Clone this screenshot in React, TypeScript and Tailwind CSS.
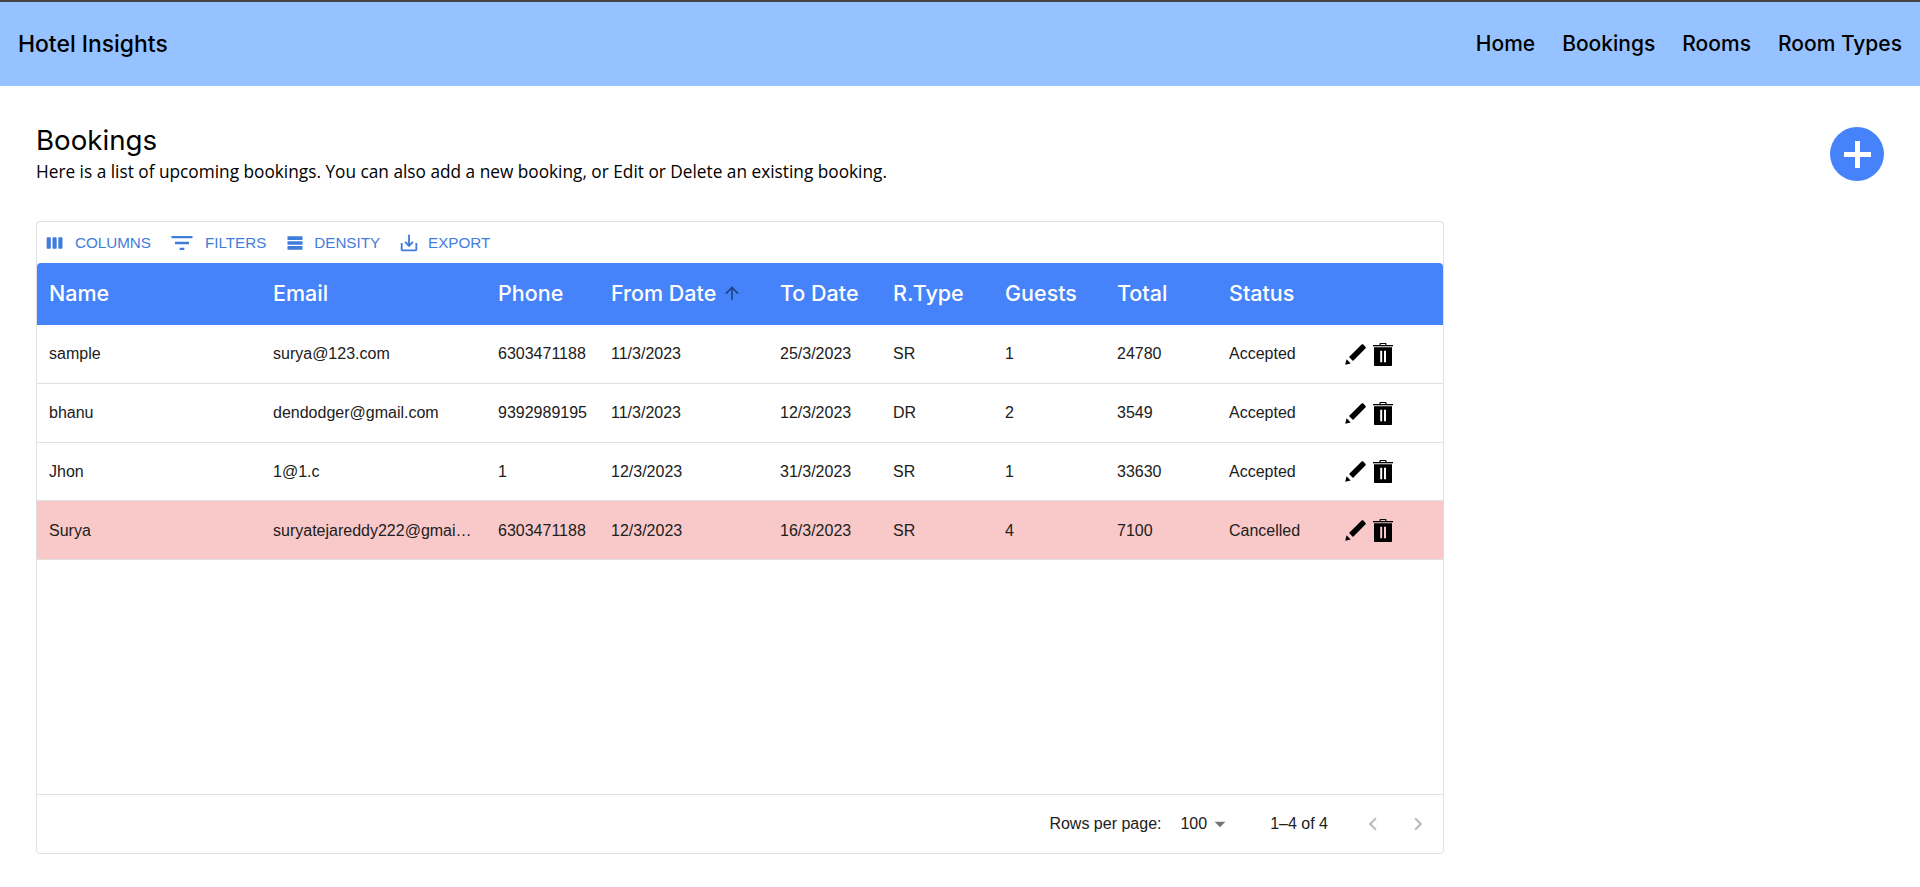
import React from 'react';

type Booking = {
  name: string;
  email: string;
  phone: string;
  from: string;
  to: string;
  type: string;
  guests: string;
  total: string;
  status: string;
};

const bookings: Booking[] = [
  { name: 'sample', email: 'surya@123.com', phone: '6303471188', from: '11/3/2023', to: '25/3/2023', type: 'SR', guests: '1', total: '24780', status: 'Accepted' },
  { name: 'bhanu', email: 'dendodger@gmail.com', phone: '9392989195', from: '11/3/2023', to: '12/3/2023', type: 'DR', guests: '2', total: '3549', status: 'Accepted' },
  { name: 'Jhon', email: '1@1.c', phone: '1', from: '12/3/2023', to: '31/3/2023', type: 'SR', guests: '1', total: '33630', status: 'Accepted' },
  { name: 'Surya', email: 'suryatejareddy222@gmail.com', phone: '6303471188', from: '12/3/2023', to: '16/3/2023', type: 'SR', guests: '4', total: '7100', status: 'Cancelled' },
];

const gridCols = 'grid grid-cols-[224px_225px_113px_169px_113px_112px_112px_112px_113px_1fr]';

const HEADING_FONT = "font-['Inter','Noto_Sans',sans-serif]";

const MuiIcon = ({ d, className }: { d: string; className?: string }) => (
  <svg viewBox="0 0 24 24" fill="currentColor" className={className}>
    <path d={d} />
  </svg>
);

const PencilIcon = () => (
  <svg viewBox="0 0 21 21" fill="currentColor" className="w-[21px] h-[21px] shrink-0">
    <path d="M16.6 0.6c.5-.5 1.2-.5 1.7 0l2.1 2.1c.5.5.5 1.2 0 1.7L8 16.9 4 12.9z" />
    <path d="M0.2 20.8 1.6 15.3 5.7 19.4z" />
  </svg>
);

const TrashIcon = () => (
  <svg viewBox="0 0 20 23" fill="currentColor" className="w-[20px] h-[23px] shrink-0">
    <path d="M6.5 2V1c0-.6.4-1 1-1h5c.6 0 1 .4 1 1v1h-1.2V1.1H7.7V2z" />
    <rect x="0" y="2" width="20" height="1.3" />
    <path fillRule="evenodd" d="M1 4.3h18V22.3c0 .4-.3.7-.7.7H1.7c-.4 0-.7-.3-.7-.7zM7.2 7.7v11.6h2V7.7zm3.8 0v11.6h2V7.7z" />
  </svg>
);

const App: React.FC = () => {
  return (
    <div className="min-h-[887px] bg-white text-black font-['Liberation_Sans',sans-serif]">
      <header className={`h-[86px] border-t-2 border-[#444444] bg-[#96c3ff] flex items-center justify-between px-[18px] ${HEADING_FONT}`}>
        <div className="text-[22.9px] font-medium">Hotel Insights</div>
        <nav className="flex items-center gap-[27px] text-[21px] font-medium">
          <a>Home</a>
          <a>Bookings</a>
          <a>Rooms</a>
          <a>Room Types</a>
        </nav>
      </header>

      <main className="pl-[36px] pr-[36px] pt-[38px]">
        <div className="flex justify-between">
          <div>
            <h1 className={`text-[27.7px] leading-[32px] ${HEADING_FONT}`}>Bookings</h1>
            <p className="mt-[4px] text-[17.25px] leading-[24px] font-['Open_Sans',sans-serif]">
              Here is a list of upcoming bookings. You can also add a new booking, or Edit or Delete an existing booking.
            </p>
          </div>
          <button className="w-[54px] h-[54px] rounded-full bg-[#4682fa] text-white flex items-center justify-center mt-[3px]">
            <svg viewBox="0 0 27 27" fill="currentColor" className="w-[27px] h-[27px]">
              <path d="M11 0h5v11h11v5H16v11h-5V16H0v-5h11z" />
            </svg>
          </button>
        </div>

        <div className="mt-[37px] w-[1408px] h-[633px] border border-[#e0e0e0] rounded-[4px] flex flex-col text-[16px] text-[#202020]">
          <div className="h-[41px] pt-[1px] flex items-center pl-[8px] text-[#3f7ddb] text-[15.2px] leading-none">
            <MuiIcon className="w-[20px] h-[20px]" d="M6 5H3c-.55 0-1 .45-1 1v12c0 .55.45 1 1 1h3c.55 0 1-.45 1-1V6c0-.55-.45-1-1-1zm14 0h-3c-.55 0-1 .45-1 1v12c0 .55.45 1 1 1h3c.55 0 1-.45 1-1V6c0-.55-.45-1-1-1zm-7 0h-3c-.55 0-1 .45-1 1v12c0 .55.45 1 1 1h3c.55 0 1-.45 1-1V6c0-.55-.45-1-1-1z" />
            <span className="ml-[10px]">COLUMNS</span>
            <MuiIcon className="w-[28px] h-[28px] ml-[17px]" d="M10 18h4v-2h-4v2zM3 6v2h18V6H3zm3 7h12v-2H6v2z" />
            <span className="ml-[9px]">FILTERS</span>
            <MuiIcon className="w-[20px] h-[20px] ml-[19px]" d="M3 4h18v4.3H3zM3 9.9h18v4.2H3zM3 15.7h18V20H3z" />
            <span className="ml-[9px]">DENSITY</span>
            <MuiIcon className="w-[22px] h-[22px] ml-[18px]" d="M19 12v7H5v-7H3v7c0 1.1.9 2 2 2h14c1.1 0 2-.9 2-2v-7h-2zm-6 .67l2.59-2.58L17 11.5l-5 5-5-5 1.41-1.41L11 12.67V3h2v9.67z" />
            <span className="ml-[8px]">EXPORT</span>
          </div>

          <div className={`${gridCols} h-[62px] pb-[2px] shrink-0 bg-[#4682fa] text-white rounded-t-[4px] items-center text-[21.5px] font-medium ${HEADING_FONT}`}>
            <div className="pl-[12px]">Name</div>
            <div className="pl-[12px]">Email</div>
            <div className="pl-[12px]">Phone</div>
            <div className="pl-[12px] flex items-center gap-[6px]">
              From Date
              <MuiIcon d="M4 12l1.41 1.41L11 7.83V20h2V7.83l5.58 5.59L20 12l-8-8-8 8z" className="w-[20px] h-[20px] text-[#1c4587]" />
            </div>
            <div className="pl-[12px]">To Date</div>
            <div className="pl-[12px]">R.Type</div>
            <div className="pl-[12px]">Guests</div>
            <div className="pl-[12px]">Total</div>
            <div className="pl-[12px]">Status</div>
            <div />
          </div>

          <div className="flex-1">
            {bookings.map((b) => (
              <div
                key={b.name}
                className={`${gridCols} h-[58.75px] pt-[1px] items-center border-b border-[#e0e0e0] ${b.status === 'Cancelled' ? 'bg-[#f9c9c9]' : ''}`}
              >
                <div className="pl-[12px]">{b.name}</div>
                <div className="pl-[12px] pr-[13px] truncate">{b.email}</div>
                <div className="pl-[12px]">{b.phone}</div>
                <div className="pl-[12px]">{b.from}</div>
                <div className="pl-[12px]">{b.to}</div>
                <div className="pl-[12px]">{b.type}</div>
                <div className="pl-[12px]">{b.guests}</div>
                <div className="pl-[12px]">{b.total}</div>
                <div className="pl-[12px]">{b.status}</div>
                <div className="pl-[15px] flex items-center gap-[7px] text-black">
                  <PencilIcon />
                  <TrashIcon />
                </div>
              </div>
            ))}
          </div>

          <div className="h-[59px] shrink-0 border-t border-[#e0e0e0] flex items-center justify-end pr-[12px]">
            <span>Rows per page:</span>
            <span className="ml-[19px]">100</span>
            <svg viewBox="0 0 24 24" fill="currentColor" className="w-[26px] h-[26px] text-[#757575]"><path d="M7 10l5 5 5-5z" /></svg>
            <span className="ml-[37px]">1–4 of 4</span>
            <svg viewBox="0 0 24 24" fill="currentColor" className="w-[26px] h-[26px] ml-[32px] text-[#bdbdbd]"><path d="M15.41 7.41 14 6l-6 6 6 6 1.41-1.41L10.83 12z" /></svg>
            <svg viewBox="0 0 24 24" fill="currentColor" className="w-[26px] h-[26px] ml-[19px] text-[#bdbdbd]"><path d="M10 6 8.59 7.41 13.17 12l-4.58 4.59L10 18l6-6z" /></svg>
          </div>
        </div>
      </main>
    </div>
  );
};

export default App;
